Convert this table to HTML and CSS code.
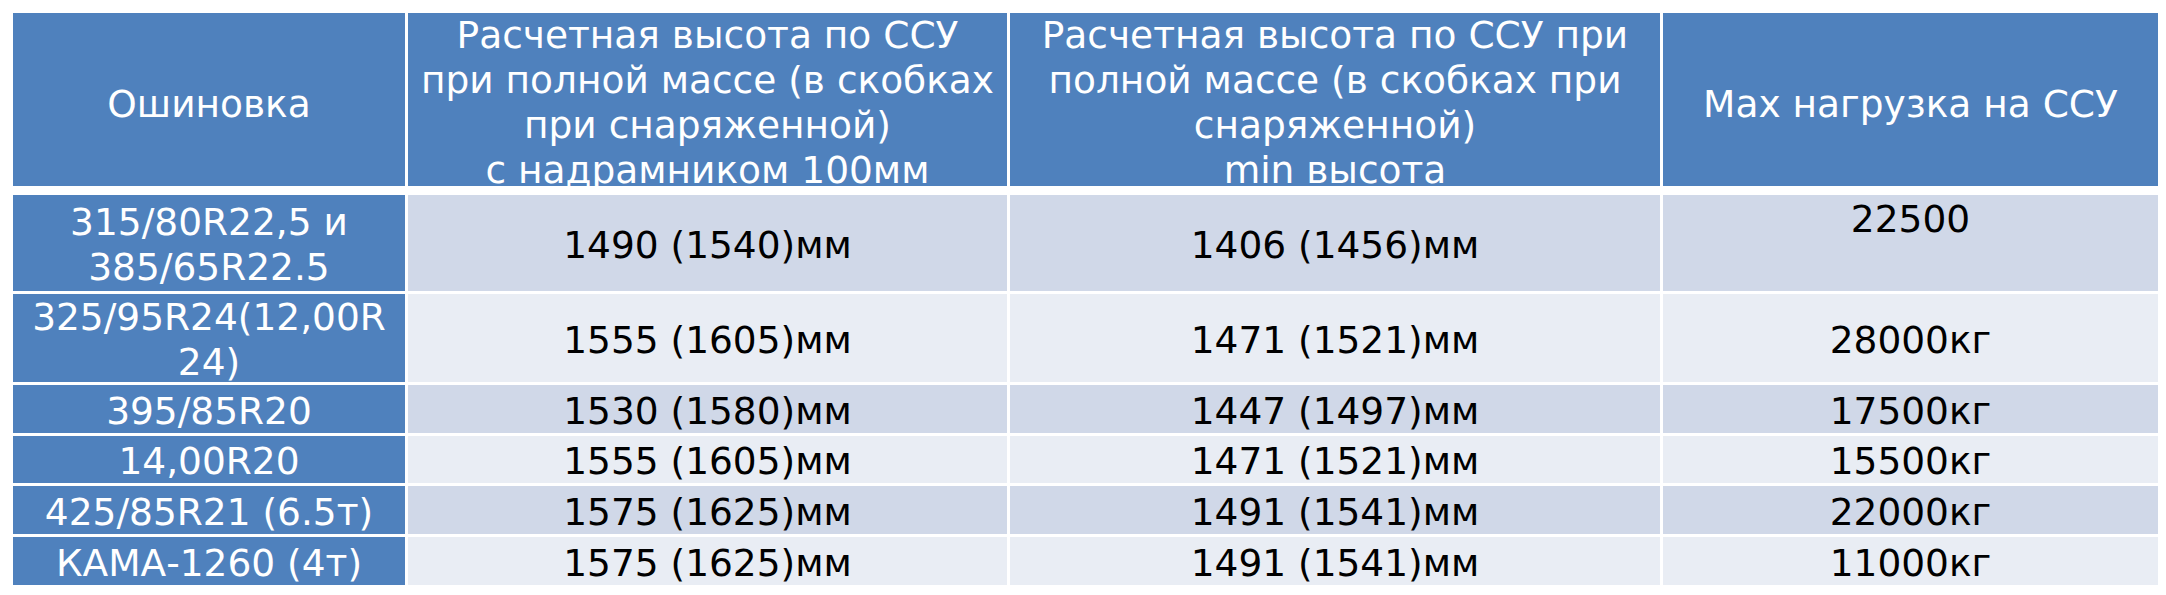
FILE: index.html
```
<!DOCTYPE html>
<html lang="ru">
<head>
<meta charset="utf-8">
<title>Ошиновка</title>
<link rel="stylesheet" href="styles.css">
</head>
<body>
<div class="sheet">
  <div class="grid head">
    <div class="cell hd single">Ошиновка</div>
    <div class="cell hd multi">Расчетная высота по ССУ<br>при полной массе (в скобках<br>при снаряженной)<br>с надрамником 100мм</div>
    <div class="cell hd multi">Расчетная высота по ССУ при<br>полной массе (в скобках при<br>снаряженной)<br>min высота</div>
    <div class="cell hd single">Max нагрузка на ССУ</div>
  </div>
  <div class="grid body">
    <div class="cell key">315/80R22,5 и<br>385/65R22.5</div>
    <div class="cell b1">1490 (1540)мм</div>
    <div class="cell b1">1406 (1456)мм</div>
    <div class="cell b1 top">22500</div>

    <div class="cell key">325/95R24(12,00R<br>24)</div>
    <div class="cell b2">1555 (1605)мм</div>
    <div class="cell b2">1471 (1521)мм</div>
    <div class="cell b2">28000кг</div>

    <div class="cell key">395/85R20</div>
    <div class="cell b1">1530 (1580)мм</div>
    <div class="cell b1">1447 (1497)мм</div>
    <div class="cell b1">17500кг</div>

    <div class="cell key">14,00R20</div>
    <div class="cell b2">1555 (1605)мм</div>
    <div class="cell b2">1471 (1521)мм</div>
    <div class="cell b2">15500кг</div>

    <div class="cell key">425/85R21 (6.5т)</div>
    <div class="cell b1">1575 (1625)мм</div>
    <div class="cell b1">1491 (1541)мм</div>
    <div class="cell b1">22000кг</div>

    <div class="cell key">КАМА-1260 (4т)</div>
    <div class="cell b2">1575 (1625)мм</div>
    <div class="cell b2">1491 (1541)мм</div>
    <div class="cell b2">11000кг</div>
  </div>
</div>
</body>
</html>
```
FILE: styles.css
```
html, body {
  margin: 0;
  padding: 0;
  background: #ffffff;
}
body {
  font-family: "DejaVu Sans", Verdana, sans-serif;
  font-size: 37.5px;
  line-height: 45px;
}
.sheet {
  padding: 13px 0 0 13px;
  width: 2145px;
}
.grid {
  display: grid;
  grid-template-columns: 392px 599px 650px 495px;
  column-gap: 3px;
  row-gap: 3px;
}
.head {
  grid-template-rows: 173px;
  margin-bottom: 9px;
}
.body {
  grid-template-rows: 96px 88px 48px 47px 48px 48px;
}
.cell {
  display: flex;
  align-items: center;
  justify-content: center;
  text-align: center;
  white-space: nowrap;
  overflow: visible;
  min-height: 0;
  box-sizing: border-box;
  padding-top: 4px;
}
.hd {
  background: #4f81bd;
  color: #ffffff;
}
.hd.single {
  padding-top: 9px;
}
.hd.multi {
  align-items: flex-start;
  padding-top: 0;
}
.key {
  background: #4f81bd;
  color: #ffffff;
}
.b1 {
  background: #d0d8e8;
  color: #000000;
}
.b2 {
  background: #e9edf4;
  color: #000000;
}
.top {
  align-items: flex-start;
  padding-top: 2px;
}
```
